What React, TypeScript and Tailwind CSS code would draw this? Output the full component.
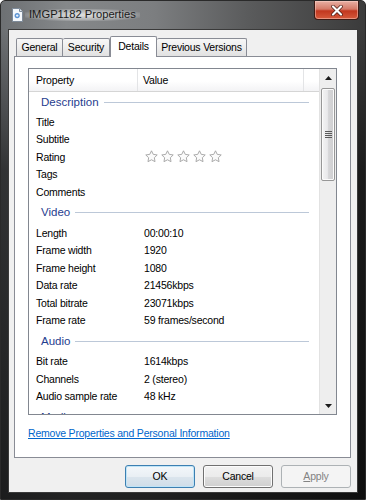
import React from "react";

type Row = { label: string; value?: string; stars?: boolean };
type Group = { title: string; rows: Row[] };

const groups: Group[] = [
  {
    title: "Description",
    rows: [
      { label: "Title" },
      { label: "Subtitle" },
      { label: "Rating", stars: true },
      { label: "Tags" },
      { label: "Comments" },
    ],
  },
  {
    title: "Video",
    rows: [
      { label: "Length", value: "00:00:10" },
      { label: "Frame width", value: "1920" },
      { label: "Frame height", value: "1080" },
      { label: "Data rate", value: "21456kbps" },
      { label: "Total bitrate", value: "23071kbps" },
      { label: "Frame rate", value: "59 frames/second" },
    ],
  },
  {
    title: "Audio",
    rows: [
      { label: "Bit rate", value: "1614kbps" },
      { label: "Channels", value: "2 (stereo)" },
      { label: "Audio sample rate", value: "48 kHz" },
    ],
  },
  { title: "Media", rows: [] },
];

function Star() {
  return (
    <svg width="13" height="13" viewBox="0 0 13 13">
      <polygon
        points="6.5,0.8 8.26,4.37 12.21,4.95 9.35,7.73 10.03,11.65 6.5,9.8 2.97,11.65 3.65,7.73 0.79,4.95 4.74,4.37"
        fill="#fbfbfb"
        stroke="#a2a2a2"
        strokeWidth="0.9"
        strokeLinejoin="round"
      />
    </svg>
  );
}

function DocIcon() {
  return (
    <svg width="11" height="14" viewBox="0 0 11 14">
      <path d="M0.5 0.5h7l3 3v10h-10z" fill="#f4f8fc" stroke="#7d8a99" />
      <path d="M7.5 0.5v3h3" fill="#dfe7ef" stroke="#7d8a99" />
      <circle cx="5.2" cy="7.6" r="2.6" fill="#5b93d3" />
      <circle cx="5.2" cy="7.6" r="1.2" fill="#e8f1fb" />
    </svg>
  );
}

function GroupHeader({ title, first }: { title: string; first: boolean }) {
  return (
    <div
      className={
        first
          ? "flex items-center h-[21px] shrink-0 pl-[12px] pr-[10px]"
          : "flex items-center h-[23px] shrink-0 pt-[1px] pl-[12px] pr-[10px]"
      }
    >
      <span className="text-[11.5px] tracking-normal text-[#1f3d8f]">{title}</span>
      <div className="ml-[5px] h-px flex-1 bg-[#bcc8d8]" />
    </div>
  );
}

function PropRow({ row }: { row: Row }) {
  return (
    <div className="flex items-center h-[17.6px] shrink-0">
      <div className="w-[108px] pl-[7px]">{row.label}</div>
      <div className="pl-[7px] flex items-center">
        {row.stars ? (
          <div className="flex gap-[3px] pl-px">
            <Star />
            <Star />
            <Star />
            <Star />
            <Star />
          </div>
        ) : (
          row.value
        )}
      </div>
    </div>
  );
}

function Arrow({ up }: { up: boolean }) {
  return (
    <svg width="7" height="4" viewBox="0 0 7 4">
      <polygon points={up ? "0,4 7,4 3.5,0" : "0,0 7,0 3.5,4"} fill="#1c1c1c" />
    </svg>
  );
}

function Scrollbar() {
  return (
    <div className="w-[17px] shrink-0 flex flex-col bg-[#eeeeee] border-l border-[#e2e2e2]">
      <div className="h-[17px] flex items-center justify-center">
        <Arrow up />
      </div>
      <div className="mt-[2px] mx-px h-[93px] rounded-[2px] border border-[#979797] bg-[linear-gradient(90deg,#f4f4f4_0%,#e9e9eb_45%,#d6d6d8_55%,#cfcfd1_100%)] shadow-[inset_0_0_0_1px_#fbfbfb] flex flex-col items-center justify-center gap-[1px]">
        <div className="w-[7px] h-px bg-[#5a5a5a]" />
        <div className="w-[7px] h-px bg-[#5a5a5a]" />
        <div className="w-[7px] h-px bg-[#5a5a5a]" />
        <div className="w-[7px] h-px bg-[#5a5a5a]" />
      </div>
      <div className="flex-1" />
      <div className="h-[17px] flex items-center justify-center">
        <Arrow up={false} />
      </div>
    </div>
  );
}

function Button({ children, kind }: { children: React.ReactNode; kind: "default" | "normal" | "disabled" }) {
  const cls =
    kind === "default"
      ? "border-[#3c7fb1] bg-[linear-gradient(180deg,#f3f7fa_0%,#e9eff4_50%,#dbe5ed_51%,#cfdde8_100%)] shadow-[inset_0_0_0_1px_#bfe4f7] text-black"
      : kind === "normal"
        ? "border-[#707070] bg-[linear-gradient(180deg,#f2f2f2_0%,#ebebeb_50%,#dddddd_51%,#cfcfcf_100%)] shadow-[inset_0_0_0_1px_#fcfcfc] text-black"
        : "border-[#adb2b5] bg-[#f4f4f4] text-[#838383]";
  return (
    <div className={`w-[70px] h-[23px] rounded-[3px] border flex items-center justify-center ${cls}`}>
      {children}
    </div>
  );
}

export default function App() {
  return (
    <div className="w-[366px] h-[500px] bg-white">
      <div className="w-[366px] h-[500px] flex flex-col rounded-t-[5px] border border-[#2a2a2a] bg-[linear-gradient(90deg,#6d7073_0%,#85888a_18%,#7c7e80_42%,#5a5b5c_68%,#3b3b3b_100%)] font-['Liberation_Sans',Arial,sans-serif] text-[10.5px] tracking-[-0.2px] leading-none text-black overflow-hidden">
        {/* title bar */}
        <div className="h-[28px] shrink-0 flex items-start justify-between">
          <div className="flex items-center h-[28px] pl-[11px] gap-[6px]">
            <DocIcon />
            <span className="text-[11.2px] tracking-normal text-[#1a1a1a] px-[4px] -mx-[4px] bg-[radial-gradient(ellipse_at_center,rgba(255,255,255,0.75)_0%,rgba(255,255,255,0.35)_55%,rgba(255,255,255,0)_80%)]">
              IMGP1182 Properties
            </span>
          </div>
          <div className="mr-[6px] w-[45px] h-[19px] rounded-b-[4px] border border-t-0 border-[#3d1a14] bg-[linear-gradient(180deg,#e8b0a4_0%,#d47a68_45%,#c2371f_55%,#d65a3c_100%)] shadow-[inset_0_0_0_1px_rgba(255,220,210,0.45)] flex items-center justify-center">
            <svg width="12" height="11" viewBox="0 0 12 11">
              <path d="M2 1.5 L10 9.5 M10 1.5 L2 9.5" stroke="#4a1a12" strokeWidth="3.6" strokeLinecap="round" />
              <path d="M2 1.5 L10 9.5 M10 1.5 L2 9.5" stroke="#ffffff" strokeWidth="2.2" strokeLinecap="round" />
            </svg>
          </div>
        </div>

        {/* frame + client */}
        <div className="flex-1 flex flex-col px-[7px] pb-[6px] bg-[linear-gradient(180deg,rgba(0,0,0,0)_0%,rgba(0,0,0,0.55)_30%,rgba(0,0,0,0.75)_100%)]">
          <div className="flex-1 flex flex-col border border-[#3a3a3a] bg-[#f0f0f0] pt-[6px] pl-[5px] pr-[6px]">
            {/* tabs */}
            <div className="h-[20px] flex items-end pl-[2px] shrink-0">
              <div className="w-[47px] h-[18px] border border-b-0 border-[#898c95] rounded-t-[2px] bg-[linear-gradient(180deg,#f7f7f7_0%,#ededed_50%,#e1e1e1_100%)] flex items-center justify-center">
                General
              </div>
              <div className="w-[47px] h-[18px] border border-l-0 border-b-0 border-[#898c95] rounded-t-[2px] bg-[linear-gradient(180deg,#f7f7f7_0%,#ededed_50%,#e1e1e1_100%)] flex items-center justify-center">
                Security
              </div>
              <div className="relative z-10 -mb-px w-[47px] h-[21px] border border-b-0 border-[#898c95] rounded-t-[2px] bg-white flex items-center justify-center pb-[2px]">
                Details
              </div>
              <div className="w-[90px] h-[18px] border border-l-0 border-b-0 border-[#898c95] rounded-t-[2px] bg-[linear-gradient(180deg,#f7f7f7_0%,#ededed_50%,#e1e1e1_100%)] flex items-center justify-center">
                Previous Versions
              </div>
            </div>

            {/* panel */}
            <div className="h-[402px] shrink-0 border border-[#898c95] bg-white pt-[11px] px-[13px] flex flex-col">
              <div className="h-[347px] shrink-0 border border-[#828790] flex bg-white">
                <div className="flex-1 flex flex-col overflow-hidden">
                  <div className="h-[23px] shrink-0 flex border-b border-[#d5d5d5] bg-[linear-gradient(180deg,#ffffff_0%,#ffffff_55%,#f3f3f5_100%)]">
                    <div className="w-[109px] pl-[7px] flex items-center border-r border-[#e3e4e6]">Property</div>
                    <div className="w-[166px] pl-[5px] flex items-center border-r border-[#e3e4e6]">Value</div>
                  </div>
                  {groups.map((g, i) => (
                    <React.Fragment key={g.title}>
                      <GroupHeader title={g.title} first={i === 0} />
                      {g.rows.map((r) => (
                        <PropRow key={r.label} row={r} />
                      ))}
                    </React.Fragment>
                  ))}
                </div>
                <Scrollbar />
              </div>
              <div className="mt-[13px]">
                <span className="text-[#0066cc] underline">Remove Properties and Personal Information</span>
              </div>
            </div>

            {/* buttons */}
            <div className="mt-[7px] flex justify-end gap-[8px]">
              <Button kind="default">OK</Button>
              <Button kind="normal">Cancel</Button>
              <Button kind="disabled">
                <span>
                  <span className="underline">A</span>pply
                </span>
              </Button>
            </div>
          </div>
        </div>
      </div>
    </div>
  );
}
